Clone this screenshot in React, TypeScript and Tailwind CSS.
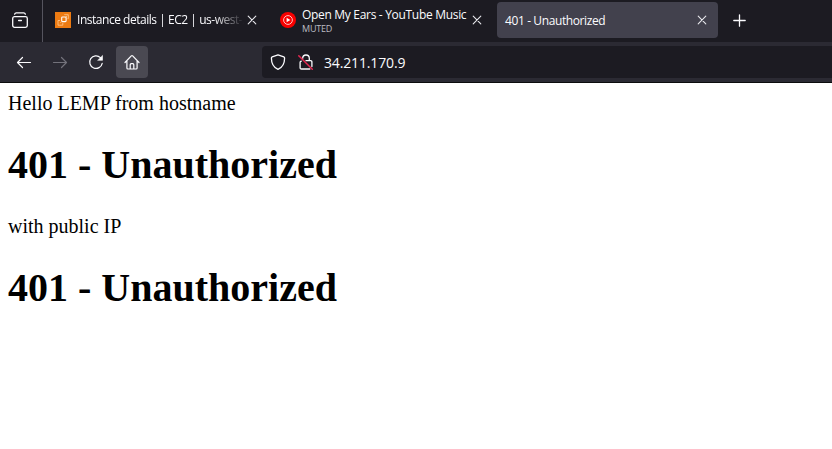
import type { ReactNode } from 'react';

const ui = "font-['Open_Sans','Noto_Sans',sans-serif]";

function Close() {
  return (
    <svg className="h-4 w-4 shrink-0" viewBox="0 0 16 16" fill="none" stroke="#e8e8ed" strokeWidth="1.1" strokeLinecap="round">
      <path d="M4.2 4.2l7.6 7.6M11.8 4.2l-7.6 7.6" />
    </svg>
  );
}

function AwsIcon() {
  return (
    <svg className="h-4 w-4 shrink-0" viewBox="0 0 16 16" fill="none" stroke="#ffd6a6" strokeWidth="0.7">
      <rect width="16" height="16" fill="#ed7b12" stroke="none" />
      <rect x="6.7" y="5" width="4.4" height="4.6" rx=".8" stroke="#fff" strokeWidth="1.1" />
      <path d="M5 8.5H3v4.7h4.8V11M9.5 3V2.7h3.8v4H12.5M11 5l1.2-1.2M6.7 9.6l-1.5 1.5" />
    </svg>
  );
}

function MusicIcon() {
  return (
    <svg className="h-4 w-4 shrink-0" viewBox="0 0 16 16">
      <circle cx="8" cy="8" r="8" fill="#f80000" />
      <circle cx="8" cy="8" r="4.4" fill="none" stroke="#ffd8d8" strokeWidth=".9" />
      <path d="M6.6 5.7v4.6L10.4 8z" fill="#fff" />
    </svg>
  );
}

function ToolButton({ children, active = false }: { children: ReactNode; active?: boolean }) {
  return (
    <button className={`flex h-8 w-8 items-center justify-center rounded ${active ? 'bg-[#4a4952]' : ''}`}>
      <svg className="h-4 w-4" viewBox="0 0 16 16" fill="none" stroke="#fbfbfe" strokeWidth="1.2" strokeLinecap="round" strokeLinejoin="round">
        {children}
      </svg>
    </button>
  );
}

export default function App() {
  return (
    <div className="flex h-[449px] w-full flex-col overflow-hidden bg-white">
      <header className={`${ui} shrink-0 text-[#fbfbfe]`}>
        <div className="flex h-[42px] bg-[#1c1b22]">
          <div className="flex w-[43px] shrink-0 items-start border-r border-[#55545e] pt-3 pl-3">
            <svg className="h-4 w-4" viewBox="0 0 16 16" fill="none" stroke="#fbfbfe" strokeWidth="1.3" strokeLinecap="round" strokeLinejoin="round">
              <path d="M2.6 2.2c.3-.9.8-1.4 1.7-1.4h7.4c.9 0 1.4.5 1.7 1.4" />
              <rect x=".7" y="4.6" width="14.6" height="10.7" rx="1.8" />
              <path d="M6.6 8.5h2.8" />
            </svg>
          </div>
          <nav className="ml-1 flex h-9 gap-1 pt-0.5">
            <div className="flex h-9 w-[221px] items-center gap-1.5 pr-2 pl-2">
              <AwsIcon />
              <span className="w-[167px] shrink-0 overflow-hidden text-[12px] tracking-[-0.47px] whitespace-nowrap [mask-image:linear-gradient(to_right,black_82%,transparent)]">
                Instance details | EC2 | us-west-2
              </span>
              <span className="-ml-1.5"><Close /></span>
            </div>
            <div className="flex h-9 w-[221px] items-center gap-1.5 pr-2 pl-2">
              <MusicIcon />
              <span className="flex w-[167px] shrink-0 flex-col whitespace-nowrap">
                <span className="text-[12px] leading-[15px] tracking-[-0.31px]">Open My Ears - YouTube Music</span>
                <span className="pt-px text-[9px] leading-[11px] tracking-[-0.2px] text-[#bcbbc2]">MUTED</span>
              </span>
              <span className="-ml-1.5"><Close /></span>
            </div>
            <div className="flex h-9 w-[221px] items-center justify-between rounded bg-[#42414d] px-2">
              <span className="pt-px text-[12px] tracking-[-0.39px]">401 - Unauthorized</span>
              <Close />
            </div>
          </nav>
          <svg className="mt-3 ml-[13px] h-4 w-4" viewBox="0 0 16 16" fill="none" stroke="#fbfbfe" strokeWidth="1.3" strokeLinecap="round">
            <path d="M2.8 8.5h11.4M8.5 2.8v11.4" />
          </svg>
        </div>
        <div className="flex h-[41px] items-start border-b border-[#0c0c0d] bg-[#2b2a33] pt-1 pl-2">
          <div className="flex gap-1">
            <ToolButton><path d="M14.5 8.5H1.6M6.5 3.5L1.5 8.5l5 5" /></ToolButton>
            <ToolButton><path stroke="#73727b" d="M1.5 8.5h12.9M9.5 3.5l5 5-5 5" /></ToolButton>
            <ToolButton>
              <path d="M14.2 9.3a6.3 6.3 0 1 1-1.8-5.7l.8.8" />
              <path d="M14.5 1.8v4.5H10z" fill="#fbfbfe" strokeWidth=".6" />
            </ToolButton>
            <ToolButton active>
              <path d="M1 8.5l6.3-6.6a1 1 0 0 1 1.4 0L15 8.5M2.9 7v7a1 1 0 0 0 1 1h8.2a1 1 0 0 0 1-1V7M6.2 15v-4.3a1 1 0 0 1 1-1h1.6a1 1 0 0 1 1 1V15" />
            </ToolButton>
          </div>
          <div className="ml-[114px] flex h-8 flex-1 items-center rounded-l bg-[#1c1b22] pl-2">
            <svg className="h-4 w-4" viewBox="0 0 16 16" fill="none" stroke="#fbfbfe" strokeWidth="1.3" strokeLinejoin="round">
              <path d="M8 .8l5.8 2.1c.5.2.8.5.8 1.1C14.6 9 12.8 13.3 8 15.3 3.2 13.3 1.4 9 1.4 4c0-.6.3-.9.8-1.1z" />
            </svg>
            <svg className="ml-3 h-4 w-4" viewBox="0 0 16 16" fill="none" strokeWidth="1.3" strokeLinecap="round">
              <path stroke="#fbfbfe" d="M4.7 4.3a3.3 3.3 0 0 1 6.6 0v2.4M8 6.7h4.7a1.2 1.2 0 0 1 1.2 1.2v4.6M3.3 7.2a1.2 1.2 0 0 0-1.2 1.2v5.4A1.2 1.2 0 0 0 3.3 15h8.5" />
              <path stroke="#e22850" strokeWidth="1.5" d="M.8 1.8L14.3 15.3" />
            </svg>
            <span className="ml-2.5 pt-px text-[14px] tracking-[-0.15px]">34.211.170.9</span>
          </div>
        </div>
      </header>
      <main className="px-2 pt-[9px] font-['Liberation_Serif','Times_New_Roman',serif] text-[20px] leading-[23px] text-black">
        <p>Hello LEMP from hostname</p>
        <h1 className="my-[27px] text-[40px] leading-[46px] font-bold">401 - Unauthorized</h1>
        <p>with public IP</p>
        <h1 className="my-[27px] text-[40px] leading-[46px] font-bold">401 - Unauthorized</h1>
      </main>
    </div>
  );
}
